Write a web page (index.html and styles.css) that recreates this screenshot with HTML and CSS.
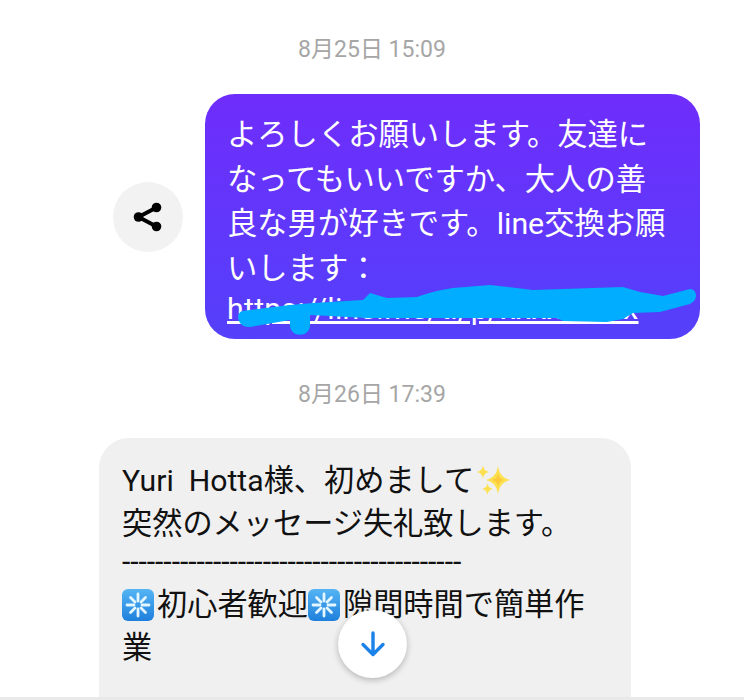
FILE: index.html
```html
<!DOCTYPE html>
<html lang="ja">
<head>
<meta charset="utf-8">
<title>Messages</title>
<link rel="stylesheet" href="styles.css">
</head>
<body>
<main class="thread">
  <div class="stamp">8月25日 15:09</div>
  <div class="row-out">
    <button class="share" aria-label="共有">
      <svg width="30" height="30" viewBox="0 0 30 30"><g fill="#000"><circle cx="5.500" cy="15" r="4.800"/><circle cx="23.500" cy="5.500" r="4.800"/><circle cx="23.500" cy="24.500" r="4.800"/></g><path d="M5.500 15L23.500 5.500M5.500 15l18 9.500" stroke="#000" stroke-width="4" fill="none"/></svg>
    </button>
    <div class="bubble-out">
      <p class="msg">よろしくお願いします。友達になってもいいですか、大人の善良な男が好きです。line交換お願いします：</p>
      <a class="link">https://line.me/ti/p/xxxxxxxxx</a>
      <svg class="scribble" width="510" height="60" viewBox="205 274 510 60"><path d="M242 311L290 305L313 303L363 300L370 293L387 298L417 297C430 292 445 289 453 288L490 285L533 290L623 287L640 292L663 296L690 289C697 289 699 300 690 304L660 312L633 313L623 319L607 322L563 321L557 318L367 318L310 315L310 325C310 338 290 338 290 325L290 320L250 327C238 328 235 314 242 311Z" fill="#00adff"/></svg>
    </div>
  </div>
  <div class="stamp stamp-second">8月26日 17:39</div>
  <div class="bubble-in">
    <p class="msg-in">Yuri&nbsp;&nbsp;Hotta様、初めまして<svg class="sparkle" width="34" height="34" viewBox="0 0 34 34"><path d="M21 3c1.500 8 4 11.500 12 14c-8 2.500-10.500 6-12 14c-1.500-8-4-11.500-12-14c8-2.500 10.500-6 12-14z" fill="#fde04f"/><path d="M21 10c.8 4 2 6 6 7c-4 1-5.200 3-6 7c-.8-4-2-6-6-7c4-1 5.200-3 6-7z" fill="#fbc93a"/><path d="M6 2c.7 4 2 6 6 7c-4 1-5.300 3-6 7c-.7-4-2-6-6-7c4-1 5.300-3 6-7z" fill="#fde04f"/><path d="M10.500 20c.6 3.500 1.800 5 5.500 6c-3.700 1-4.900 2.500-5.500 6c-.6-3.500-1.800-5-5.500-6c3.700-1 4.900-2.500 5.500-6z" fill="#fde04f"/></svg></p>
    <p class="msg-in">突然のメッセージ失礼致します。</p>
    <p class="msg-in rule">-----------------------------------------</p>
    <p class="msg-in"><svg class="emoji" width="32" height="32" viewBox="0 0 32 32"><defs><linearGradient id="tile" x1="0" y1="0" x2="0" y2="1"><stop offset="0" stop-color="#55b4f4"/><stop offset="1" stop-color="#1e80dc"/></linearGradient></defs><rect width="32" height="32" rx="6" fill="url(#tile)"/><g stroke="#e4f6ff" stroke-width="2.800" stroke-linecap="round"><path d="M16 5v7M16 20v7M5 16h7M20 16h7M8.500 8.500l4.500 4.500M19 19l4.500 4.500M23.500 8.500L19 13M13 19l-4.500 4.500"/></g></svg>初心者歓迎<svg class="emoji" width="32" height="32" viewBox="0 0 32 32"><rect width="32" height="32" rx="6" fill="url(#tile)"/><g stroke="#e4f6ff" stroke-width="2.800" stroke-linecap="round"><path d="M16 5v7M16 20v7M5 16h7M20 16h7M8.500 8.500l4.500 4.500M19 19l4.500 4.500M23.500 8.500L19 13M13 19l-4.500 4.500"/></g></svg>隙間時間で簡単作業</p>
  </div>
</main>
<button class="down" aria-label="下へ">
  <svg width="30" height="30" viewBox="0 0 30 30"><path d="M15 4v21M5 15.500l10 10 10-10" fill="none" stroke="#1a82e8" stroke-width="3.400" stroke-linecap="round" stroke-linejoin="round"/></svg>
</button>
<div class="edge"></div>
</body>
</html>
```
FILE: styles.css
```css
* { box-sizing: border-box; }
html, body { margin: 0; height: 700px; overflow: hidden; background: #fff; }
body { position: relative; font-family: Roboto, "Noto Sans CJK JP", sans-serif; }
p { margin: 0; }
.thread { display: flex; flex-direction: column; padding-top: 37px; height: 700px; overflow: hidden; }
.stamp { text-align: center; font-size: 23px; line-height: 26px; color: #a6a6a6; flex: none; }
.stamp-second { margin-top: 43px; }
.row-out { display: flex; align-items: center; justify-content: flex-end; gap: 22px; margin-top: 31px; padding-right: 44px; flex: none; }
.share { width: 70px; height: 70px; border: 0; border-radius: 50%; background: #f2f2f2; display: flex; align-items: center; justify-content: center; padding: 0; }
.bubble-out { position: relative; width: 495px; height: 245px; padding: 19px 28px 0 22px; border-radius: 30px; color: #fff; background: linear-gradient(180deg, #6f2dfb 0%, #5440fb 100%); }
.msg { font-size: 30.300px; line-height: 44.500px; }
.link { display: block; font-size: 30.300px; line-height: 36px; letter-spacing: .27px; color: #fff; text-decoration: underline; white-space: nowrap; }
.scribble { position: absolute; left: 0; top: 180px; overflow: visible; }
.bubble-in { flex: none; width: 532px; height: 262px; margin: 30px 0 0 99px; padding: 21px 40px 0 23px; border-radius: 30px 30px 0 0; background: #f0f0f0; color: #111; }
.msg-in { font-size: 30.200px; line-height: 43px; }
.rule { line-height: 34px; margin-bottom: 4px; letter-spacing: -.07px; white-space: nowrap; }
.sparkle { vertical-align: -6px; margin-left: 3px; }
.emoji { vertical-align: -6px; margin-right: 3px; }
.down { position: absolute; left: 338px; top: 610px; width: 69px; height: 68px; border: 0; border-radius: 50%; background: #fff; box-shadow: 0 2px 6px rgba(0,0,0,.25); display: flex; align-items: center; justify-content: center; padding: 0; }
.edge { position: absolute; left: 0; right: 0; bottom: 0; height: 3px; background: #e9e9e9; }
```
